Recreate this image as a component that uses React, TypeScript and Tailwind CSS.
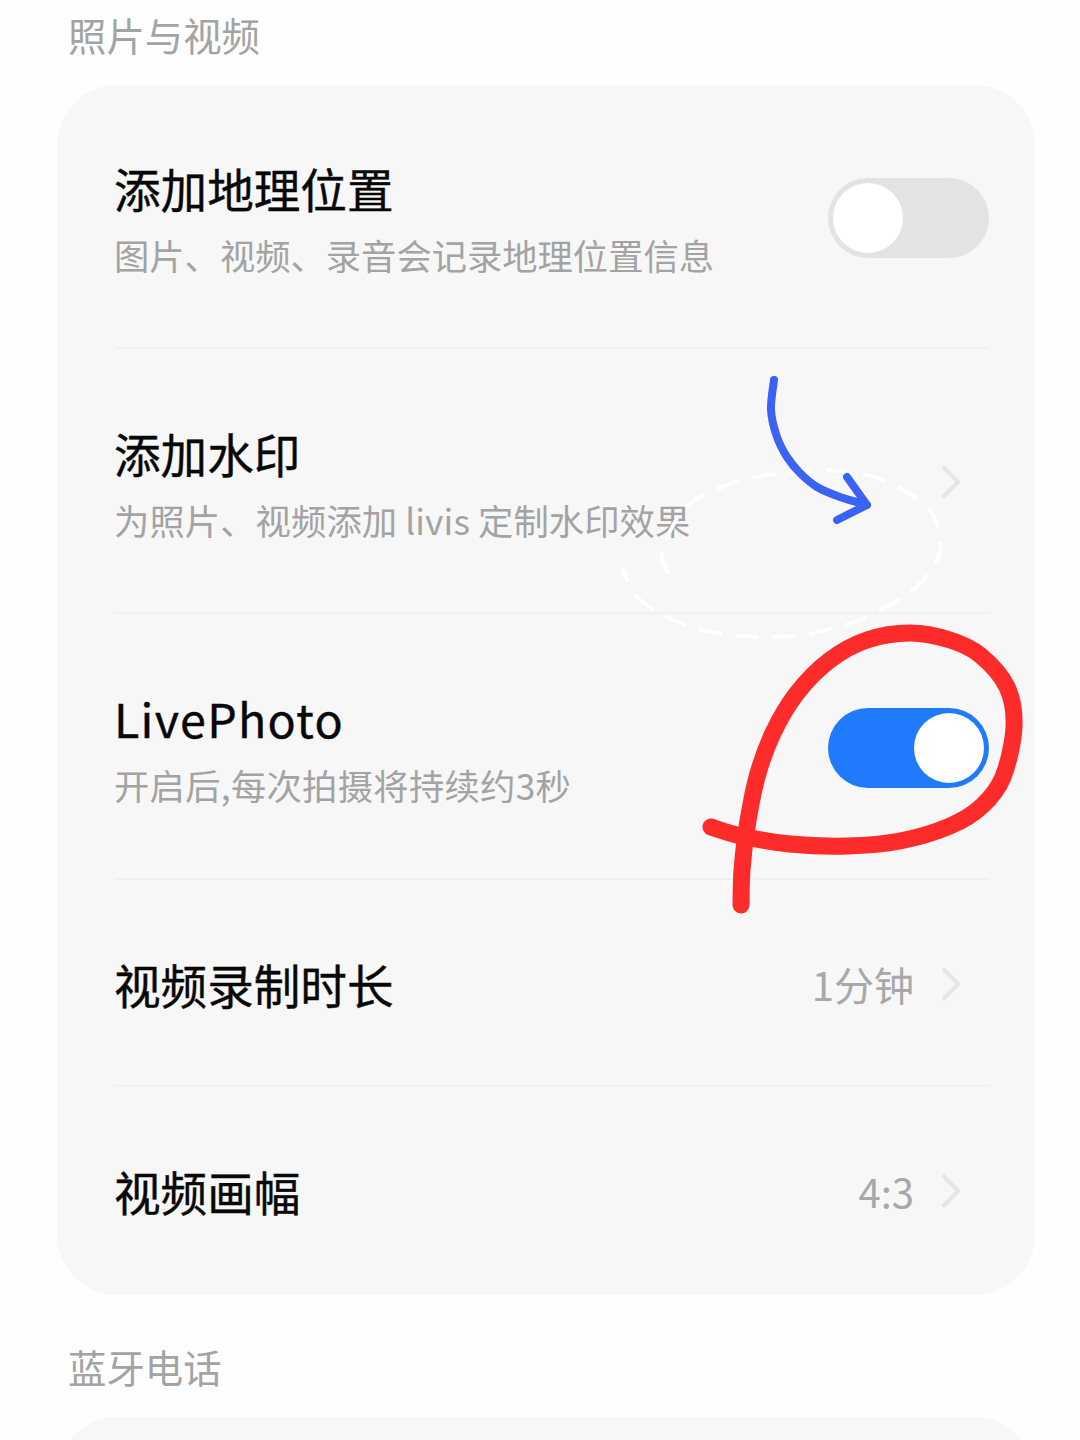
const FONT = "font-['Noto_Sans_CJK_SC','Noto_Sans',sans-serif]";

type Pt = [number, number];

// smooth line through traced points (catmull-rom to bezier)
function smooth(pts: Pt[]) {
  let d = `M${pts[0][0]} ${pts[0][1]}`;
  for (let i = 0; i < pts.length - 1; i++) {
    const p0 = pts[i - 1] ?? pts[i];
    const p1 = pts[i];
    const p2 = pts[i + 1];
    const p3 = pts[i + 2] ?? p2;
    const c1x = p1[0] + (p2[0] - p0[0]) / 6;
    const c1y = p1[1] + (p2[1] - p0[1]) / 6;
    const c2x = p2[0] - (p3[0] - p1[0]) / 6;
    const c2y = p2[1] - (p3[1] - p1[1]) / 6;
    d += ` C${c1x.toFixed(1)} ${c1y.toFixed(1)} ${c2x.toFixed(1)} ${c2y.toFixed(1)} ${p2[0]} ${p2[1]}`;
  }
  return d;
}

const DASHED: Pt[] = [
  [668, 572], [662, 557], [667, 537], [690, 503], [733, 483], [767, 475], [817, 470], [867, 475], [903, 490],
  [930, 510], [940, 537], [937, 560], [913, 590], [867, 617], [837, 627], [803, 635], [767, 637], [733, 635],
  [700, 630], [667, 617], [637, 597], [623, 570],
];
const BLUE: Pt[] = [[774, 380], [771, 410], [777, 437], [787, 457], [800, 473], [817, 487], [840, 497], [867, 505]];
const RED: Pt[] = [
  [711, 827], [741, 836], [790, 844], [847, 846], [900, 841], [950, 826], [982, 806], [1003, 777], [1014, 727],
  [1007, 687], [980, 655], [950, 640], [910, 633], [867, 640], [830, 660], [797, 693], [773, 733], [757, 777],
  [747, 827], [742, 870], [741, 905],
];

function Chevron() {
  return (
    <svg className="ml-[27px] mr-[28px] h-[34px] w-[20px] shrink-0" viewBox="0 0 20 34" fill="none" aria-hidden>
      <path d="M3 2.5 L17 17 L3 31.5" stroke="#e6e6e6" strokeWidth="4" strokeLinecap="round" strokeLinejoin="round" />
    </svg>
  );
}

function Toggle({ on }: { on?: boolean }) {
  return (
    <div
      className={`flex h-[80px] w-[161px] shrink-0 items-center rounded-full p-[5px] ${
        on ? "justify-end bg-[#1f7bfb]" : "justify-start bg-[#e3e3e3]"
      }`}
    >
      <div className="h-[70px] w-[70px] rounded-full bg-white" />
    </div>
  );
}

type RowProps = {
  title: string;
  sub?: string;
  height: string;
  value?: string;
  toggle?: "on" | "off";
  chevron?: boolean;
  last?: boolean;
  titleClass?: string;
  subClass?: string;
};

function Row({ title, sub, height, value, toggle, chevron, last, titleClass = "", subClass = "" }: RowProps) {
  return (
    <div className={`ml-[58px] mr-[46px] flex items-center justify-between ${height} ${last ? "pb-[3px]" : "border-b-2 border-[#f0f0f0]"}`}>
      <div className={`-ml-[1px] flex flex-col ${sub ? "pt-[6px]" : "pt-[2px]"}`}>
        <div className={`text-[46.6px] leading-[60px] font-normal text-[#080808] [-webkit-text-stroke:0.4px_#080808] ${titleClass}`}>
          {title}
        </div>
        {sub && <div className={`mt-[12px] text-[35.3px] leading-[50px] text-[#a3a3a3] ${subClass}`}>{sub}</div>}
      </div>
      <div className="flex items-center pt-[3px]">
        {value && <span className="text-[40px] text-[#a8a8a8]">{value}</span>}
        {chevron && <Chevron />}
        {toggle && <Toggle on={toggle === "on"} />}
      </div>
    </div>
  );
}

/* hand-drawn marks on top of the screenshot */
function Annotations() {
  return (
    <svg className="absolute top-0 left-0 h-[1440px] w-[1080px]" viewBox="0 0 1080 1440" fill="none" aria-hidden>
      <path d={smooth(DASHED)} stroke="#ffffff" strokeWidth="4" strokeLinecap="round" strokeDasharray="20 17" />
      <path
        d={`${smooth(BLUE)} M847 477 L867 505 L837 520`}
        stroke="#3a62f5"
        strokeWidth="8"
        strokeLinecap="round"
        strokeLinejoin="round"
      />
      <path d={smooth(RED)} stroke="#fe2b2b" strokeWidth="17" strokeLinecap="round" strokeLinejoin="round" />
    </svg>
  );
}

export default function App() {
  return (
    <div className={`relative h-[1440px] w-[1080px] overflow-hidden bg-[#fefefe] ${FONT}`}>
      <div className="pl-[68px] pt-[7px] pb-[3px] text-[38.4px] leading-[54px] text-[#a3a3a3]">照片与视频</div>
      <div className="ml-[57px] mr-[45px] mt-[21px] rounded-[60px] bg-[#f7f7f7]">
        <Row height="h-[264px]" title="添加地理位置" sub="图片、视频、录音会记录地理位置信息" toggle="off" />
        <Row height="h-[265px]" title="添加水印" sub="为照片、视频添加 livis 定制水印效果" subClass="tracking-[0.1px]" chevron />
        <Row
          height="h-[266px]"
          title="LivePhoto"
          titleClass="tracking-[1.3px]"
          sub="开启后,每次拍摄将持续约3秒"
          subClass="tracking-[0.3px]"
          toggle="on"
        />
        <Row height="h-[207px]" title="视频录制时长" value="1分钟" chevron />
        <Row height="h-[208px]" title="视频画幅" value="4:3" chevron last />
      </div>
      <div className="pl-[68px] pt-[44px] pb-[3px] text-[38.4px] leading-[54px] text-[#a3a3a3]">蓝牙电话</div>
      <div className="ml-[57px] mr-[45px] mt-[21px] h-[200px] rounded-[60px] bg-[#f7f7f7]" />
      <Annotations />
    </div>
  );
}
